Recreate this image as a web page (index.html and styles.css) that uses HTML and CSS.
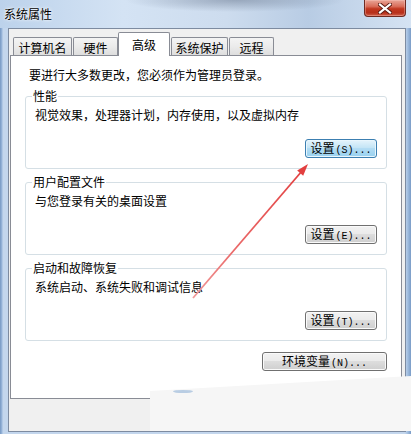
FILE: index.html
```html
<!DOCTYPE html>
<html lang="zh-CN">
<head>
<meta charset="utf-8">
<title>系统属性</title>
<link rel="stylesheet" href="styles.css">
</head>
<body>
<div class="window">
  <div class="titlebar">
    <span class="title">系统属性</span>
    <div class="close">
      <svg width="14" height="11" viewBox="0 0 14 11">
        <path d="M2 1.5 L12 9.5 M12 1.5 L2 9.5" stroke="#5a1a12" stroke-width="4" stroke-linecap="square"/>
        <path d="M2 1.5 L12 9.5 M12 1.5 L2 9.5" stroke="#ffffff" stroke-width="2.2" stroke-linecap="square"/>
      </svg>
    </div>
  </div>
  <div class="content">
    <div class="tabs">
      <div class="tab tab-w59">计算机名</div>
      <div class="tab tab-w45">硬件</div>
      <div class="tab tab-sel">高级</div>
      <div class="tab tab-w57">系统保护</div>
      <div class="tab tab-w45">远程</div>
    </div>
    <div class="panel">
      <p class="intro">要进行大多数更改，您必须作为管理员登录。</p>
      <fieldset class="group">
        <legend>性能</legend>
        <p class="desc">视觉效果，处理器计划，内存使用，以及虚拟内存</p>
        <div class="actions"><button class="btn btn-focus">设置<span class="lat">(S)...</span></button></div>
      </fieldset>
      <fieldset class="group">
        <legend>用户配置文件</legend>
        <p class="desc">与您登录有关的桌面设置</p>
        <div class="actions"><button class="btn">设置<span class="lat">(E)...</span></button></div>
      </fieldset>
      <fieldset class="group">
        <legend>启动和故障恢复</legend>
        <p class="desc">系统启动、系统失败和调试信息</p>
        <div class="actions"><button class="btn">设置<span class="lat">(T)...</span></button></div>
      </fieldset>
      <div class="actions env"><button class="btn btn-wide">环境变量<span class="lat">(N)...</span></button></div>
    </div>
  </div>
  <svg class="overlay" width="411" height="434" viewBox="0 0 411 434">
    <defs>
      <linearGradient id="ag" x1="193" y1="298" x2="305" y2="168" gradientUnits="userSpaceOnUse">
        <stop offset="0" stop-color="#f19a9a"/>
        <stop offset="0.35" stop-color="#ea6a6a"/>
        <stop offset="1" stop-color="#e23f3f"/>
      </linearGradient>
    </defs>
    <polygon points="150,391 411,376 411,431 150,431" fill="#f6f6f6"/>
    <ellipse cx="183" cy="391.5" rx="10" ry="1.6" fill="#b9cde3"/>
    <line x1="193" y1="298" x2="302" y2="171" stroke="url(#ag)" stroke-width="1.8"/>
    <polygon points="308,164 303.2,175.7 297.2,170.5" fill="#e23f3f"/>
  </svg>
</div>
</body>
</html>
```
FILE: styles.css
```css
html, body {
  margin: 0;
  padding: 0;
}
body {
  width: 411px;
  height: 434px;
  overflow: hidden;
  font-family: "Noto Sans CJK SC", "Noto Sans", sans-serif;
  font-size: 12px;
  line-height: 14px;
  color: #000;
}
.window {
  position: relative;
  width: 411px;
  height: 434px;
  display: flex;
  flex-direction: column;
  background: linear-gradient(90deg, #7698c3 0, #9bb8dc 2px, #c3d6ed 3px, #c3d6ed 405px, #9ebbdd 408px, #7a9cc7 411px);
}
.titlebar {
  height: 28px;
  flex: none;
  display: flex;
  align-items: flex-start;
  background:
    radial-gradient(ellipse 110px 12px at 235px 0px, rgba(110,125,148,0.55), rgba(110,125,148,0) 100%),
    linear-gradient(90deg, #bcd2eb 0%, #d4e3f4 30%, #cddcee 55%, #b8cce4 75%, #d5e3f3 100%);
}
.title {
  margin: 7px 0 0 4px;
  line-height: 14px;
  text-shadow: 0 0 4px #fff, 0 0 2px #fff;
}
.close {
  margin-left: auto;
  margin-right: 5px;
  width: 42px;
  height: 17px;
  box-sizing: border-box;
  border: 1px solid #6e2a22;
  border-top: none;
  border-radius: 0 0 4px 4px;
  background: linear-gradient(#e9a597 0%, #d96d59 40%, #c1371f 55%, #b7301b 80%, #d0614c 100%);
  display: flex;
  align-items: center;
  justify-content: center;
  box-shadow: inset 0 0 0 1px rgba(255,210,200,0.35);
}
.content {
  flex: 1;
  margin: 0 5px 2px 8px;
  border: 1px solid #7d8ba0;
  background: #f0f0f0;
  padding-top: 3px;
  display: flex;
  flex-direction: column;
}
.tabs {
  display: flex;
  align-items: flex-end;
  height: 23px;
  margin-left: 4px;
}
.tab {
  height: 18px;
  box-sizing: border-box;
  border: 1px solid #898c95;
  border-bottom: none;
  border-radius: 2px 2px 0 0;
  margin-right: 1px;
  background: linear-gradient(#f4f4f4 0%, #ebebeb 50%, #dedede 100%);
  text-align: center;
  line-height: 17px;
  padding-top: 1px;
  white-space: nowrap;
}
.tab-w59 { width: 59px; }
.tab-w45 { width: 45px; }
.tab-w57 { width: 57px; }
.tab-sel {
  width: 52px;
  height: 24px;
  margin-left: -1px;
  margin-bottom: -1px;
  position: relative;
  z-index: 1;
  background: #fff;
  line-height: 18px;
  padding-top: 3px;
}
.panel {
  width: 392px;
  height: 344px;
  box-sizing: border-box;
  margin-left: 1px;
  border: 1px solid #898c95;
  background: #fff;
  padding: 12px 14px 0 14px;
  display: flex;
  flex-direction: column;
}
.intro {
  margin: 0 0 7px 4px;
  line-height: 14px;
}
.group {
  margin: 0 0 6px 0;
  padding: 0 9px 10px 9px;
  border: 1px solid #d5dfe5;
  border-radius: 3px;
}
.group legend {
  padding: 0 1px;
  margin-left: -3px;
  line-height: 14px;
}
.desc {
  margin: 5px 0 0 0;
  line-height: 14px;
}
.actions {
  display: flex;
  justify-content: flex-end;
  margin-top: 17px;
}
.env {
  margin-top: 5px;
}
.btn {
  width: 72px;
  height: 19px;
  box-sizing: border-box;
  padding: 0;
  border: 1px solid #707070;
  border-radius: 3px;
  background: linear-gradient(#f2f2f2 0%, #ebebeb 45%, #dddddd 50%, #cfcfcf 100%);
  box-shadow: inset 0 0 0 1px #fafafa;
  font-family: "Noto Sans CJK SC", "Noto Sans", sans-serif;
  font-size: 12px;
  line-height: 16px;
  color: #000;
  white-space: nowrap;
}
.btn-wide {
  width: 125px;
}
.btn-focus {
  border-color: #3c7fb1;
  background: linear-gradient(#e5f4fc 0%, #c4e5f6 45%, #b2dcf4 50%, #98d1ef 100%);
  box-shadow: inset 0 0 0 1px #e8f6fd;
}
.lat {
  font-family: "Liberation Mono", monospace;
  font-size: 10px;
  margin-left: 1px;
}
.overlay {
  position: absolute;
  left: 0;
  top: 0;
  pointer-events: none;
}
```
